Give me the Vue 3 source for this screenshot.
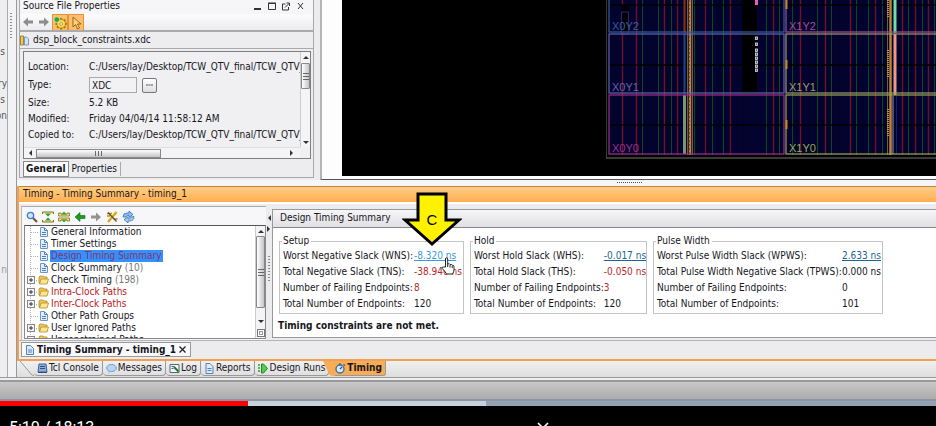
<script setup>
const fileRows = [
  { label: 'Size:', value: '5.2 KB' },
  { label: 'Modified:', value: 'Friday 04/04/14 11:58:12 AM' },
  { label: 'Copied to:', value: 'C:/Users/lay/Desktop/TCW_QTV_final/TCW_QTV_' },
]

const tree = [
  { name: 'General Information', kind: 'doc' },
  { name: 'Timer Settings', kind: 'doc' },
  { name: 'Design Timing Summary', kind: 'doc', failed: true, selected: true },
  { name: 'Clock Summary', kind: 'doc', count: '(10)' },
  { name: 'Check Timing', kind: 'folder', count: '(198)' },
  { name: 'Intra-Clock Paths', kind: 'folder', failed: true },
  { name: 'Inter-Clock Paths', kind: 'folder', failed: true },
  { name: 'Other Path Groups', kind: 'doc' },
  { name: 'User Ignored Paths', kind: 'folder' },
  { name: 'Unconstrained Paths', kind: 'folder' },
]

const groups = [
  {
    title: 'Setup',
    size: 'setup',
    rows: [
      { label: 'Worst Negative Slack (WNS):', value: '-8.320 ns', style: 'hot' },
      { label: 'Total Negative Slack (TNS):', value: '-38.946 ns', style: 'bad' },
      { label: 'Number of Failing Endpoints:', value: '8', style: 'bad' },
      { label: 'Total Number of Endpoints:', value: '120' },
    ],
  },
  {
    title: 'Hold',
    size: 'hold',
    rows: [
      { label: 'Worst Hold Slack (WHS):', value: '-0.017 ns', style: 'link' },
      { label: 'Total Hold Slack (THS):', value: '-0.050 ns', style: 'bad' },
      { label: 'Number of Failing Endpoints:', value: '3', style: 'bad' },
      { label: 'Total Number of Endpoints:', value: '120' },
    ],
  },
  {
    title: 'Pulse Width',
    size: 'pulse',
    rows: [
      { label: 'Worst Pulse Width Slack (WPWS):', value: '2.633 ns', style: 'link' },
      { label: 'Total Pulse Width Negative Slack (TPWS):', value: '0.000 ns' },
      { label: 'Number of Failing Endpoints:', value: '0' },
      { label: 'Total Number of Endpoints:', value: '101' },
    ],
  },
]

const views = [
  { name: 'Tcl Console', icon: 'console' },
  { name: 'Messages', icon: 'bubble' },
  { name: 'Log', icon: 'log' },
  { name: 'Reports', icon: 'doc' },
  { name: 'Design Runs', icon: 'run' },
  { name: 'Timing', icon: 'clock', active: true },
]

const redCols = [16, 30, 58, 71, 99, 124, 167, 194, 219, 244, 269, 296, 309, 322]
const greenCols = [36, 52, 65, 88, 106, 117, 160, 173, 186, 211, 225, 250, 262, 276, 302, 316, 328]
const gridRows = [5, 65, 125]
const fineCols = Array.from({ length: 54 }, (_, i) => 5 + i * 6)
const regions = [
  { name: 'X0Y2', x: 3, y: -27, w: 175, color: '#33609c' },
  { name: 'X1Y2', x: 180, y: -27, w: 175, color: '#a0509a' },
  { name: 'X0Y1', x: 3, y: 34, w: 175, color: '#6464b0' },
  { name: 'X1Y1', x: 180, y: 34, w: 175, color: '#a09a70' },
  { name: 'X0Y0', x: 3, y: 95, w: 175, color: '#a03088' },
  { name: 'X1Y0', x: 180, y: 95, w: 175, color: '#98a850' },
]
const cells = [37, 43, 49, 53, 57, 61, 65, 69]
const teeth = [0, 45, 90, 135, 180, 225, 270, 315]
</script>

<template>
  <div class="screen">
    <div class="workspace">
      <aside class="rail">
        <span class="r1">s</span>
        <span class="r2">ary</span>
        <span class="r3">s</span>
        <span class="r4">on</span>
        <span class="r5">n</span>
      </aside>
      <div class="rail-split"><i class="grip"></i></div>

      <main class="main">
        <div class="upper">
          <section class="props">
            <header class="props-title">
              <span>Source File Properties</span>
              <svg class="winbtns" width="52" height="12" viewBox="0 0 52 12" fill="none" stroke="#333">
                <path d="M1 9h7" stroke-width="2" />
                <path d="M15.500 3.500h7v6h-7zM15 3h8" />
                <path d="M32.500 4h-3v6h6v-3M32 7.500l4-4M33.500 3h3v3" />
                <path d="M45 3l5 6M50 3l-5 6" />
              </svg>
            </header>
            <div class="props-tools">
              <button class="tool" aria-label="Back">
                <svg width="12" height="12" viewBox="0 0 12 12"><path d="M1 6l5-4.500v3h5v3H6v3z" fill="#8c8c8c" /></svg>
              </button>
              <button class="tool" aria-label="Forward">
                <svg width="12" height="12" viewBox="0 0 12 12"><path d="M11 6L6 1.500v3H1v3h5v3z" fill="#8c8c8c" /></svg>
              </button>
              <button class="tool on" aria-label="Settings">
                <svg width="14" height="14" viewBox="0 0 14 14">
                  <g fill="#b07c18">
                    <rect v-for="a in teeth" :key="a" x="7" y="2" width="2.400" height="3" :transform="`rotate(${a} 8.2 7.8)`" />
                  </g>
                  <circle cx="8.200" cy="7.800" r="4.200" fill="#fbdf48" stroke="#a87c1c" stroke-width=".7" />
                  <circle cx="8.200" cy="8" r="1.400" fill="#fff" stroke="#96701c" stroke-width=".7" />
                  <circle cx="3.800" cy="3.600" r="2.800" fill="#2da52d" stroke="#e8f5e0" stroke-width=".6" />
                </svg>
              </button>
              <button class="tool on" aria-label="Select">
                <svg width="14" height="14" viewBox="0 0 14 14"><path d="M4 1v10l2.500-2.500L8.500 13l2-1-2-4H12z" fill="#ffd27a" stroke="#8e5a18" stroke-width=".9" /></svg>
              </button>
            </div>
            <div class="file">
              <svg width="9" height="11" viewBox="0 0 9 11">
                <path d="M.5 1h3v9h-3z" fill="#f0c850" stroke="#8a7020" stroke-width=".8" />
                <path d="M4.500 2h2l2 2v6h-4z" fill="#d4e4f6" stroke="#5a86b8" stroke-width=".8" />
              </svg>
              <span>dsp_block_constraints.xdc</span>
            </div>
            <div class="props-body">
              <div class="sheet">
                <div class="sheet-rows">
                  <div class="line"><span>Location:</span><b>C:/Users/lay/Desktop/TCW_QTV_final/TCW_QTV_</b></div>
                  <div class="line type">
                    <label for="ftype">Type:</label>
                    <input id="ftype" value="XDC" readonly>
                    <button class="more" aria-label="Choose type"><svg width="7" height="2" viewBox="0 0 7 2"><path d="M0 1h7" stroke="#555" stroke-dasharray="2 .5" /></svg></button>
                  </div>
                  <div v-for="r in fileRows" :key="r.label" class="line"><span>{{ r.label }}</span><b>{{ r.value }}</b></div>
                </div>
                <div class="vbar">
                  <i class="up"></i><i class="thumb short"></i><i class="down"></i>
                </div>
                <div class="hbar"><i class="left"></i><i class="hthumb"></i><i class="right"></i></div>
              </div>
              <div class="sheet-tabs">
                <button class="sheet-tab current">General</button>
                <button class="sheet-tab">Properties</button>
              </div>
            </div>
          </section>

          <section class="device">
            <div class="canvas">
              <svg class="chip" width="330" height="160" viewBox="0 0 330 160">
                <rect x="0" y="-5" width="340" height="163" fill="#000" stroke="#77756a" />
                <rect x="3" y="0" width="327" height="155" fill="#030330" />
                <path v-for="x in fineCols" :key="'f' + x" :d="`M${x} 0V155`" stroke="#02022a" stroke-width="2" />
                <path v-for="x in greenCols" :key="'g' + x" :d="`M${x}.5 0V155`" stroke="#0e4620" stroke-width="1" />
                <path v-for="x in redCols" :key="'r' + x" :d="`M${x}.5 0V155`" stroke="#701226" stroke-width="1.400" />
                <rect x="136" y="0" width="15" height="93" fill="#000" />
                <path v-for="y in gridRows" :key="'h' + y" :d="`M3 ${y}H330`" stroke="#000" stroke-width="1.400" />
                <path d="M78.500 0V33" stroke="#8c2c20" stroke-width="2" />
                <path d="M78.500 34V94" stroke="#164a84" stroke-width="2" />
                <path d="M78.500 95V154" stroke="#76967a" stroke-width="3" />
                <path d="M81.500 0V155M86.500 0V155M281.500 0V155" stroke="#74603c" />
                <path d="M84 0V155M284.500 0V155" stroke="#bc8434" stroke-width="2.500" />
                <path d="M83 0V155" stroke="#402a18" stroke-width="1" stroke-dasharray="2 2" />
                <path d="M282 0V17M282 50V77M282 109V137" stroke="#cc8f3c" stroke-width="2" stroke-dasharray="1 1" />
                <path d="M289 0V33" stroke="#6ce0aa" stroke-width="3" />
                <path d="M289 34V95" stroke="#f09888" stroke-width="3" />
                <path d="M287 96V154" stroke="#4c506c" stroke-width="2" />
                <path d="M290.500 96V154" stroke="#181882" />
                <rect x="15" y="5" width="8" height="27" fill="#000008" />
                <rect x="15.500" y="12" width="7" height="22" fill="none" stroke="#38205c" />
                <rect v-for="r in regions" :key="r.name" :x="r.x" :y="r.y" :width="r.w" height="59" fill="none" :stroke="r.color" stroke-width="1.200" />
                <rect x="149" y="0" width="3" height="5" fill="#e45cc4" />
                <rect v-for="y in cells" :key="'c' + y" x="149.500" :y="y" width="2" height="2.500" fill="#555" stroke="#e4e4f0" stroke-width=".8" />
                <path d="M180.500 0V9M180.500 60V69M180.500 120V129" stroke="#c48a20" stroke-width="2" />
                <text v-for="r in regions" :key="'t' + r.name" class="region" :x="r.x + 3" :y="r.y + 57" :fill="r.color">{{ r.name }}</text>
              </svg>
            </div>
          </section>
        </div>

        <div class="hsplit"><i class="hgrip"></i></div>

        <section class="timing">
          <header class="timing-title">Timing - Timing Summary - timing_1</header>
          <div class="timing-body">
            <div class="nav">
              <div class="nav-tools">
                <button class="tool" aria-label="Search">
                  <svg width="12" height="12" viewBox="0 0 12 12"><path d="M7 7l4 4" stroke="#7b4a34" stroke-width="2" /><circle cx="4.500" cy="4.500" r="3.200" fill="#cfe6fa" stroke="#3f7ec4" stroke-width="1.300" /></svg>
                </button>
                <button class="tool" aria-label="Collapse all">
                  <svg width="12" height="12" viewBox="0 0 12 12"><path d="M.5 3V1h11v2M.5 9v2h11V9" fill="#f6e9a0" stroke="#7c7420" /><path d="M3 2.500h6L6 5.500zM3 9.500h6L6 6.500z" fill="#2f9a3c" /></svg>
                </button>
                <button class="tool" aria-label="Expand all">
                  <svg width="12" height="12" viewBox="0 0 12 12"><path d="M.5 3.500V2H3v1h6V2h2.500v3H.5zM.5 8.500V10H3V9h6v1h2.500V7H.5z" fill="#f3df80" stroke="#7c7420" stroke-width=".8" /><path d="M3 3.500h6L6 .5zM3 8.500h6L6 11.500z" fill="#48a43c" /></svg>
                </button>
                <button class="tool" aria-label="Previous">
                  <svg width="12" height="12" viewBox="0 0 12 12"><path d="M1 6l5-4.500v3h5v3H6v3z" fill="#1f9a22" stroke="#116614" stroke-width=".6" /></svg>
                </button>
                <button class="tool" aria-label="Next">
                  <svg width="12" height="12" viewBox="0 0 12 12"><path d="M11 6L6 1.500v3H1v3h5v3z" fill="#939393" /></svg>
                </button>
                <button class="tool" aria-label="Report options">
                  <svg width="12" height="12" viewBox="0 0 12 12" fill="none"><path d="M1 2.500h5M1 5h3M7.500 8h4" stroke="#b48a1c" stroke-width="1.300" /><path d="M10.500 1L2 11" stroke="#dca818" stroke-width="2.400" /><path d="M2 1.500l8.500 9" stroke="#5d4b2c" stroke-width="1.200" /></svg>
                </button>
                <button class="tool" aria-label="Refresh">
                  <svg width="13" height="12" viewBox="0 0 13 12"><path d="M1 6a4 4 0 0 1 4-4h2V0l4 3.500L7 6.500v-2H5.500A2 2 0 0 0 4 6z" fill="#8cc0ee" stroke="#2a66a8" stroke-width=".7" /><path d="M12 5.500a4 4 0 0 1-4 4.500H6v2L2 8.500 6 5.800v2h1.500A2 2 0 0 0 9 6z" fill="#a4cef2" stroke="#2a66a8" stroke-width=".7" /></svg>
                </button>
              </div>
              <div class="tree-box">
                <ul class="tree">
                  <li v-for="n in tree" :key="n.name" :class="n.kind">
                    <svg v-if="n.kind === 'doc'" width="24" height="12" viewBox="0 0 24 12">
                      <path d="M4.500 0v12M5 6.500h8" stroke="#b4b4b4" stroke-dasharray="1 1" />
                      <path d="M14.500 1.500h4l3 3v6h-7z" fill="#e2eefb" stroke="#6a96c8" />
                      <path d="M18.500 2v2.500h3M16 6.500h4M16 8.500h4" fill="none" stroke="#5282ba" />
                    </svg>
                    <svg v-else width="24" height="12" viewBox="0 0 24 12">
                      <path d="M4.500 0v12M8 6.500h4" stroke="#b4b4b4" stroke-dasharray="1 1" />
                      <rect x="1.500" y="2.500" width="7" height="7" fill="#f6f6f6" stroke="#888" />
                      <path d="M3 6h4M5 4v4" stroke="#334" />
                      <path d="M13 3l1-1h3l1 1h3v6h-8z" fill="#f0c850" stroke="#b48b24" stroke-width=".8" />
                      <path d="M15 5h7.500l-1.500 5h-7.500z" fill="#ffe694" stroke="#b48b24" stroke-width=".8" />
                    </svg>
                    <span class="node" :class="{ failed: n.failed, selected: n.selected }">{{ n.name }}</span>
                    <span v-if="n.count" class="count">{{ n.count }}</span>
                  </li>
                </ul>
                <div class="vbar"><i class="up"></i><i class="thumb long"></i><i class="down"></i><i class="corner"></i></div>
              </div>
            </div>

            <div class="vsplit"><i class="tri-l"></i><i class="tri-r"></i><i class="grip"></i></div>

            <div class="report">
              <h2>Design Timing Summary</h2>
              <div class="report-body">
                <div class="groups">
                  <fieldset v-for="g in groups" :key="g.title" :class="g.size">
                    <legend>{{ g.title }}</legend>
                    <table>
                      <tbody>
                        <tr v-for="r in g.rows" :key="r.label">
                          <th scope="row">{{ r.label }}</th>
                          <td>
                            <a v-if="r.style === 'hot' || r.style === 'link'" href="#" :class="r.style">{{ r.value }}</a>
                            <span v-else :class="r.style">{{ r.value }}</span>
                          </td>
                        </tr>
                      </tbody>
                    </table>
                  </fieldset>
                </div>
                <p class="verdict">Timing constraints are not met.</p>
              </div>
            </div>
          </div>
          <div class="doc-tabs">
            <button class="doc-tab">
              <svg width="8" height="10" viewBox="0 0 8 10"><path d="M.5.5h4l3 3v6h-7z" fill="#dceafa" stroke="#5282ba" /><path d="M2 5h4M2 7h4" stroke="#5282ba" /></svg>
              <span>Timing Summary - timing_1</span>
              <svg width="7" height="7" viewBox="0 0 7 7"><path d="M.5.500l6 6M6.500.500l-6 6" stroke="#222" stroke-width="1.300" /></svg>
            </button>
          </div>
        </section>

        <nav class="views">
          <svg class="lead" width="15" height="15" viewBox="0 0 15 15"><path d="M1 0l11 13q1 1.500 3 1.500" fill="none" stroke="#9a9a9a" /></svg>
          <template v-for="v in views" :key="v.name">
            <svg v-if="v.active" class="slope" width="12" height="15" viewBox="0 0 12 15"><path d="M0 0h12v15h-2q-3 0-4-2z" fill="#f8ac55" /></svg>
            <button class="view" :class="{ active: v.active }">
              <svg width="11" height="11" viewBox="0 0 11 11">
                <g v-if="v.icon === 'console'"><path d="M2 1h7l1 8H1z" fill="#8ab2de" stroke="#3c5f8c" /><path d="M3 3.500h5M3 5.500h5M1 9.500h9" stroke="#2f4f78" /></g>
                <g v-else-if="v.icon === 'bubble'"><ellipse cx="5.500" cy="5" rx="4.800" ry="3.600" fill="#b6d4f6" stroke="#5a86c0" stroke-width=".8" /><path d="M3 8l-1 2.500L5.500 8z" fill="#8eb4e2" /></g>
                <g v-else-if="v.icon === 'log'"><path d="M1 1.500h9v8H1z" fill="#f2f6fa" stroke="#567" /><path d="M2.500 3.500h3M2.500 5.500h2" stroke="#567" /><path d="M5 4l4.500 4.500" stroke="#1f7a2a" stroke-width="2" /></g>
                <g v-else-if="v.icon === 'doc'"><path d="M2 .5h4l3 3v7H2z" fill="#dceafa" stroke="#5282ba" /><path d="M3.500 5.500h4M3.500 7.500h4" stroke="#5282ba" /></g>
                <g v-else-if="v.icon === 'run'"><path d="M1 1v9" stroke="#1d8a24" stroke-width="1.300" stroke-dasharray="2 1" /><path d="M3.500 1h2l4 4.500-4 4.500h-2z" fill="#50cc48" stroke="#1d8a24" /></g>
                <g v-else><circle cx="5" cy="6" r="4" fill="#d8e9fa" stroke="#3c6fa8" stroke-width="1.400" /><path d="M5 6l2-2M4 1h2M8.500 1.500l1.500 1" stroke="#2c4f80" stroke-width="1.200" /></g>
              </svg>
              <span>{{ v.name }}</span>
            </button>
          </template>
        </nav>

        <svg class="arrow" width="60" height="55" viewBox="0 0 60 55">
          <path d="M16 2h28v26h13L30 52 3 28h13z" fill="#fff200" stroke="#000" stroke-width="3" />
          <text x="30" y="33" text-anchor="middle">C</text>
        </svg>
        <svg class="hand" width="14" height="18" viewBox="0 0 14 18">
          <path d="M4.500 10V2q0-1.300 1-1.300T6.700 2v5q2-.8 2.300.5 2-.5 2.200.8 1.800-.3 1.800 1.500v3q0 2-1.500 4.200H5.500Q4 14 1.200 11.500q-.7-1.500 1-1.500z" fill="#fff" stroke="#222" />
          <path d="M6.700 7v3M9 8v2.500M11.200 9v2" stroke="#222" />
        </svg>
      </main>
    </div>

    <div class="taskbar"></div>
    <div class="progress"><i class="played"></i><i class="buffered"></i></div>
    <footer class="player">
      <span>5:10 / 18:13</span>
      <svg class="chev" width="12" height="6" viewBox="0 0 12 6"><path d="M1 1l5 5 5-5" fill="none" stroke="#fff" stroke-width="1.600" /></svg>
    </footer>
  </div>
</template>

<style>
body { background: #000; }
</style>

<style scoped>
* { box-sizing: border-box; }
.screen {
  font: 10px/12px "DejaVu Sans Condensed", "DejaVu Sans", sans-serif;
  color: #16161c;
  background: #000;
  overflow: hidden;
}
button { font: inherit; color: inherit; border: 0; padding: 0; margin: 0; background: none; display: inline-flex; align-items: center; white-space: nowrap; }
svg { display: block; flex: none; }
i { display: block; }

.workspace { display: flex; background: #ececee; }
.rail { width: 8px; flex: none; background: #eeeef0; border-right: 1px solid #aaa; overflow: hidden; color: #555; display: flex; flex-direction: column; padding-top: 46px; }
.rail span { height: 12px; display: flex; justify-content: flex-end; }
.rail .r1, .rail .r3 { padding-right: 2px; }
.rail .r2 { margin-top: 20px; }
.rail .r3, .rail .r4 { margin-top: 4px; }
.rail .r5 { margin-top: 142px; color: #999; }
.rail-split { width: 9px; flex: none; border-right: 1px solid #999; padding: 13px 0 0 2px; background: #f3f3f5; }
.grip { width: 2px; height: 26px; background: repeating-linear-gradient(#888 0 1px, transparent 1px 3px); }
.main { flex: 1; min-width: 0; position: relative; }

.upper { display: flex; height: 180px; }
.props { width: 295px; flex: none; margin: 0 6px 2px 2px; border: 1px solid #a8a8a8; border-top: 0; display: flex; flex-direction: column; background: #ededef; }
.props-title { height: 14px; padding: 0 8px 0 3px; display: flex; justify-content: space-between; background: #f6f6f8; }
.props-tools { height: 18px; display: flex; align-items: center; background: linear-gradient(#fcfcfd, #ececee); border-bottom: 2px solid #aaa; }
.tool { width: 16px; height: 16px; justify-content: center; flex: none; }
.tool.on { background: #ffbe6c; border: 1px solid #e0953c; border-bottom: 0; }
.file { height: 17px; display: flex; align-items: center; gap: 4px; border-bottom: 1px solid #aaa; }
.props-body { flex: 1; padding: 2px 2px 0 3px; }
.sheet { height: 108px; border: 1px solid #7e7e7e; display: grid; grid-template: 1fr 11px / 1fr 10px; background: #f0f0f2; overflow: hidden; }
.sheet-rows { padding: 7px 0 0 4px; overflow: hidden; }
.line { display: flex; height: 16px; align-items: center; white-space: nowrap; }
.line > :first-child { width: 61px; flex: none; }
.line b { font-weight: normal; }
.line.type { height: 20px; }
.line input { width: 48px; height: 16px; padding: 0 2px; border: 1px solid #aaa; background: #f2f2f4; font: inherit; color: inherit; outline: 0; }
.more { width: 15px; height: 15px; margin-left: 5px; border: 1px solid #777; border-radius: 2px; justify-content: center; background: linear-gradient(#fff, #ddd); }
.vbar { width: 10px; display: flex; flex-direction: column; align-items: center; border-left: 1px solid #ccc; background: #f4f4f6; }
.up, .down { width: 0; border: 3px solid transparent; border-bottom-color: #333; margin-top: 1px; }
.down { border-bottom-color: transparent; border-top-color: #333; margin: auto 0 0; }
.thumb { width: 9px; border: 1px solid #888; border-radius: 1px; margin-top: 4px; background: repeating-linear-gradient(#666 0 1px, transparent 1px 3px) center / 6px 7px no-repeat, linear-gradient(90deg, #fff, #c4c4c8); }
.thumb.short { height: 26px; }
.thumb.long { height: 72px; margin-top: 3px; }
.hbar { display: flex; align-items: center; padding: 0 0 0 2px; background: #f4f4f6; border-top: 1px solid #ddd; }
.left, .right { border: 3px solid transparent; border-right-color: #333; }
.right { border-right-color: transparent; border-left-color: #333; margin: 0 4px 0 auto; }
.hthumb { width: 125px; height: 9px; margin-left: 4px; border: 1px solid #888; background: repeating-linear-gradient(90deg, #666 0 1px, transparent 1px 3px) center / 7px 5px no-repeat, linear-gradient(#fff, #c4c4c8); }
.sheet-tabs { display: flex; height: 16px; margin-top: 2px; }
.sheet-tab { padding: 0 3px; border-right: 1px solid #aaa; margin: 1px 0; }
.sheet-tab.current { font-weight: bold; background: #fff; border: 1px solid #888; margin: 0; padding: 0 2px; }

.device { flex: 1; min-width: 0; border: 2px solid #b4b4b6; border-width: 0 0 1px 2px; border-bottom-color: #555; background: #fdfdfd; padding: 0 0 3px 20px; }
.canvas { height: 100%; background: #000; display: flex; justify-content: flex-end; overflow: hidden; }
.region { font: 11px "Liberation Sans", sans-serif; }

.hsplit { height: 6px; background: #f6f6f8; display: flex; justify-content: center; padding: 2px 0 0 306px; }
.hgrip { width: 26px; height: 1px; background: repeating-linear-gradient(90deg, #555 0 1px, transparent 1px 2px); }

.timing { border: solid #f0a050; border-width: 0 0 2px 2px; background: #ececee; }
.timing-title { height: 16px; padding: 1px 4px; border-top: 1px solid #c08040; background: linear-gradient(#ffce86, #ffae50); }
.timing-body { display: flex; height: 139px; padding: 2px 0 0 2px; border-top: 2px solid #fff; border-bottom: 1px solid #b4b4b6; }
.nav { width: 245px; flex: none; border-top: 1px solid #aaa; border-left: 1px solid #bbb; padding: 2px 0 1px 2px; display: flex; flex-direction: column; background: #f7f7f9; }
.nav-tools { display: flex; height: 16px; }
.tree-box { flex: 1; min-height: 0; display: flex; border: 1px solid #888; border-top-color: #555; background: #fff; overflow: hidden; }
.tree { flex: 1; list-style: none; margin: 0; padding: 0 0 0 1px; overflow: hidden; }
.tree li { height: 12px; display: flex; align-items: center; white-space: nowrap; }
.node { padding: 0 1px; }
.failed { color: #b82020; }
.selected { background: #3390ff; color: #8c3462; }
.count { margin-left: 2px; color: #777; }
.corner { width: 8px; height: 8px; border: 1px solid #777; box-shadow: inset 0 0 0 1px #fff, inset 0 0 0 2px #999; margin: 3px 0 1px; }
.vsplit { width: 6px; flex: none; padding-top: 9px; display: flex; flex-direction: column; align-items: center; }
.tri-l, .tri-r { border: 3px solid transparent; border-right-color: #333; }
.tri-l { margin-left: -3px; }
.tri-r { margin: 5px 0 24px 2px; border-right-color: transparent; border-left-color: #333; }
.report { flex: 1; min-width: 0; margin: 3px 0 2px; border: 1px solid #999; border-right: 0; background: #fff; display: flex; flex-direction: column; }
h2 { margin: 0; height: 18px; padding: 2px 7px; font: inherit; border-bottom: 1px solid #888; background: linear-gradient(#f6f6f8, #e0e0e4); }
.report-body { flex: 1; padding: 6px 6px 0; }
.groups { display: flex; gap: 6px; }
fieldset { margin: 0; padding: 0 1px 0 3px; border: 1px solid #c4c4c6; height: 80px; min-width: 0; flex: none; }
fieldset.setup { width: 185px; }
fieldset.hold { width: 177px; }
fieldset.pulse { width: 230px; }
legend { padding: 0 2px 0 1px; margin-left: -1px; line-height: 14px; }
table { border-collapse: collapse; width: 100%; white-space: nowrap; }
th, td { padding: 0; height: 16px; line-height: 14px; font-weight: normal; text-align: left; }
.setup td { width: 48px; }
.hold td { width: 42px; }
.pulse td { width: 39px; }
.bad { color: #b82828; }
.link { color: #1d6494; }
.hot { color: #3c98d8; }
.verdict { margin: 5px 0 0 -1px; font-weight: bold; line-height: 14px; }
.doc-tabs { height: 18px; padding: 1px 0 2px 2px; display: flex; }
.doc-tab { height: 15px; padding: 0 4px; gap: 3px; font-weight: bold; border: 1px solid #999; background: #fafafc; }

.views { display: flex; height: 16px; padding-left: 2px; background: linear-gradient(#f0f0f1, #dededf); }
.view { height: 15px; padding: 0 3px; gap: 1px; border-right: 1px solid #999; border-bottom: 1px solid #999; border-radius: 0 0 4px 4px; }
.view.active { font-weight: bold; background: #f8ac55; border-radius: 0 0 3px 0; padding-left: 0; }
.slope { margin-left: -6px; }

.arrow { position: absolute; left: 385px; top: 192px; }
.arrow text { font: 15px "Liberation Sans", sans-serif; }
.hand { position: absolute; left: 424px; top: 257px; }

.taskbar { height: 24px; border-top: 1px solid #999; background: linear-gradient(#eee 0 2px, #999 2px 4px, #c8c8c8 4px, #ababab 21px, #8a96a4 21px); }
.progress { height: 5px; display: flex; background: #93a3b5; }
.played { width: 26.500%; background: #f00; }
.buffered { width: 25.400%; background: #c8d0dc; }
.player { height: 21px; overflow: hidden; display: grid; grid-template-columns: 1fr auto 1fr; padding: 12px 9px 0; color: #fff; font: 16px/20px Roboto, sans-serif; background: #000; }
.chev { margin-left: 150px; margin-top: 4px; }
</style>
